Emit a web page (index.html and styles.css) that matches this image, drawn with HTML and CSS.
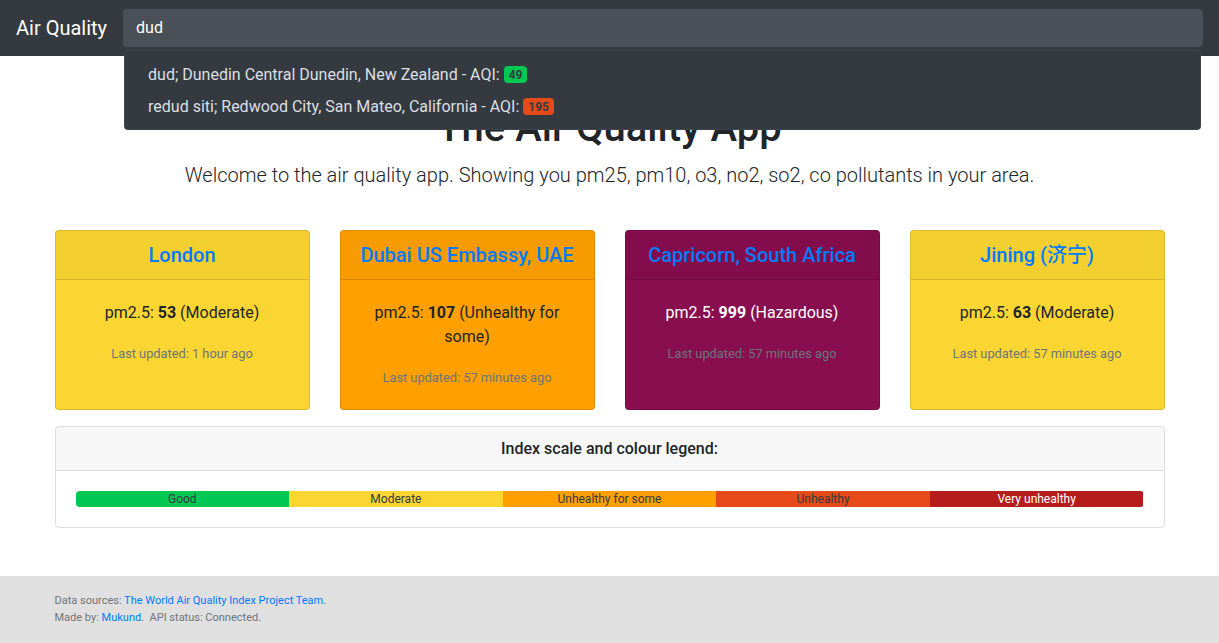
FILE: index.html
```html
<!DOCTYPE html>
<html lang="en">
<head>
<meta charset="utf-8">
<title>Air Quality</title>
<link rel="stylesheet" href="styles.css">
</head>
<body>
<nav class="navbar">
  <a class="brand" href="#">Air Quality</a>
  <div class="search">
    <div class="search-input">dud</div>
    <div class="dropdown">
      <div class="dropdown-item">dud; Dunedin Central Dunedin, New Zealand - AQI: <span class="badge badge-good">49</span></div>
      <div class="dropdown-item">redud siti; Redwood City, San Mateo, California - AQI: <span class="badge badge-unhealthy">195</span></div>
    </div>
  </div>
</nav>

<main class="container">
  <h1 class="title">The Air Quality App</h1>
  <p class="lead">Welcome to the air quality app. Showing you pm25, pm10, o3, no2, so2, co pollutants in your area.</p>

  <div class="cards">
    <div class="card moderate">
      <div class="card-header"><a href="#">London</a></div>
      <div class="card-body">
        <p class="card-text">pm2.5: <b>53</b> (Moderate)</p>
        <p class="card-text last"><small class="muted">Last updated: 1 hour ago</small></p>
      </div>
    </div>
    <div class="card sensitive">
      <div class="card-header"><a href="#">Dubai US Embassy, UAE</a></div>
      <div class="card-body">
        <p class="card-text">pm2.5: <b>107</b> (Unhealthy for some)</p>
        <p class="card-text last"><small class="muted">Last updated: 57 minutes ago</small></p>
      </div>
    </div>
    <div class="card hazardous">
      <div class="card-header"><a href="#">Capricorn, South Africa</a></div>
      <div class="card-body">
        <p class="card-text">pm2.5: <b>999</b> (Hazardous)</p>
        <p class="card-text last"><small class="muted">Last updated: 57 minutes ago</small></p>
      </div>
    </div>
    <div class="card moderate">
      <div class="card-header"><a href="#">Jining (济宁)</a></div>
      <div class="card-body">
        <p class="card-text">pm2.5: <b>63</b> (Moderate)</p>
        <p class="card-text last"><small class="muted">Last updated: 57 minutes ago</small></p>
      </div>
    </div>
  </div>

  <div class="legend">
    <div class="legend-header"><h6>Index scale and colour legend:</h6></div>
    <div class="legend-body">
      <div class="progress">
        <div class="bar good">Good</div>
        <div class="bar moderate-bar">Moderate</div>
        <div class="bar sensitive-bar">Unhealthy for some</div>
        <div class="bar unhealthy-bar">Unhealthy</div>
        <div class="bar very-bar">Very unhealthy</div>
      </div>
    </div>
  </div>
</main>

<footer class="footer">
  <div class="container footer-inner">
    <div>Data sources: <a href="#">The World Air Quality Index Project Team.</a></div>
    <div>Made by: <a href="#">Mukund</a>.&nbsp; API status: Connected.</div>
  </div>
</footer>
</body>
</html>
```
FILE: styles.css
```css
* { box-sizing: border-box; }
html, body { margin: 0; padding: 0; }
body {
  font-family: Roboto, "Noto Sans CJK SC", sans-serif;
  font-size: 16px;
  line-height: 1.5;
  color: #212529;
  background: #fff;
  overflow: hidden;
}
a { color: #007bff; text-decoration: none; }

.navbar {
  background: #343a40;
  height: 56px;
  padding: 9px 16px;
  display: flex;
  align-items: center;
  position: relative;
  z-index: 10;
}
.brand {
  color: #fff;
  font-size: 20px;
  line-height: 30px;
  margin-right: 16px;
  white-space: nowrap;
}
.search { position: relative; flex: 1; }
.search-input {
  height: 38px;
  background: #495057;
  border-radius: 4px;
  color: #fff;
  padding: 6px 13px;
  line-height: 26px;
  font-size: 16px;
}
.dropdown {
  position: absolute;
  top: 41px;
  left: 1px;
  right: 2px;
  background: #343a40;
  border: 1px solid rgba(255,255,255,0.06);
  border-radius: 4px;
  padding: 8px 0 6px;
}
.dropdown-item {
  color: #dcdfe3;
  padding: 4px 23px;
  line-height: 24px;
  white-space: nowrap;
}
.badge {
  display: inline-block;
  font-size: 12px;
  font-weight: 700;
  line-height: 1;
  padding: 3px 5px 2px;
  border-radius: 4px;
  color: #343a40;
  vertical-align: 1px;
}
.badge-good { background: #00c853; }
.badge-unhealthy { background: #e64a19; }

.container {
  width: 1110px;
  margin: 0 auto;
}
.title {
  margin: 48px 0 8px;
  font-size: 40px;
  font-weight: 500;
  line-height: 1.2;
  text-align: center;
}
.lead {
  margin: 0 0 40px;
  font-size: 20px;
  font-weight: 300;
  line-height: 30px;
  text-align: center;
}

.cards {
  display: grid;
  grid-template-columns: repeat(4, 1fr);
  gap: 30px;
}
.card {
  border: 1px solid rgba(0,0,0,0.125);
  border-radius: 4px;
  text-align: center;
  overflow: hidden;
}
.card-header {
  padding: 12px 10px;
  background: rgba(0,0,0,0.03);
  border-bottom: 1px solid rgba(0,0,0,0.125);
  font-size: 20px;
  font-weight: 500;
  line-height: 24px;
  white-space: nowrap;
}
.card-body { padding: 21px 20px 20px; }
.card-text { margin: 0 0 16px; }
.card-text.last { margin-bottom: 0; }
.muted { color: #6c757d; font-size: 80%; }

.moderate { background: #fbd632; }
.sensitive { background: #ffa000; }
.hazardous { background: #880e4f; color: #fff; }

.legend {
  margin-top: 16px;
  border: 1px solid rgba(0,0,0,0.125);
  border-radius: 4px;
  overflow: hidden;
}
.legend-header {
  padding: 12px 20px;
  background: rgba(0,0,0,0.03);
  border-bottom: 1px solid rgba(0,0,0,0.125);
  text-align: center;
}
.legend-header h6 {
  margin: 0;
  font-size: 16px;
  font-weight: 500;
  line-height: 19px;
}
.legend-body { padding: 20px; }
.progress {
  display: flex;
  height: 16px;
  border-radius: 4px;
  overflow: hidden;
  font-size: 12px;
  line-height: 16px;
}
.bar { flex: 1; text-align: center; color: #343a40; }
.good { background: #00c853; }
.moderate-bar { background: #fbd632; }
.sensitive-bar { background: #ffa000; }
.unhealthy-bar { background: #e64a19; }
.very-bar { background: #b71c1c; color: #fff; }

.footer {
  margin-top: 48px;
  background: #e0e0e0;
  height: 80px;
}
.footer-inner {
  padding-top: 16px;
  font-size: 11px;
  line-height: 17px;
  color: #6c757d;
}
```
